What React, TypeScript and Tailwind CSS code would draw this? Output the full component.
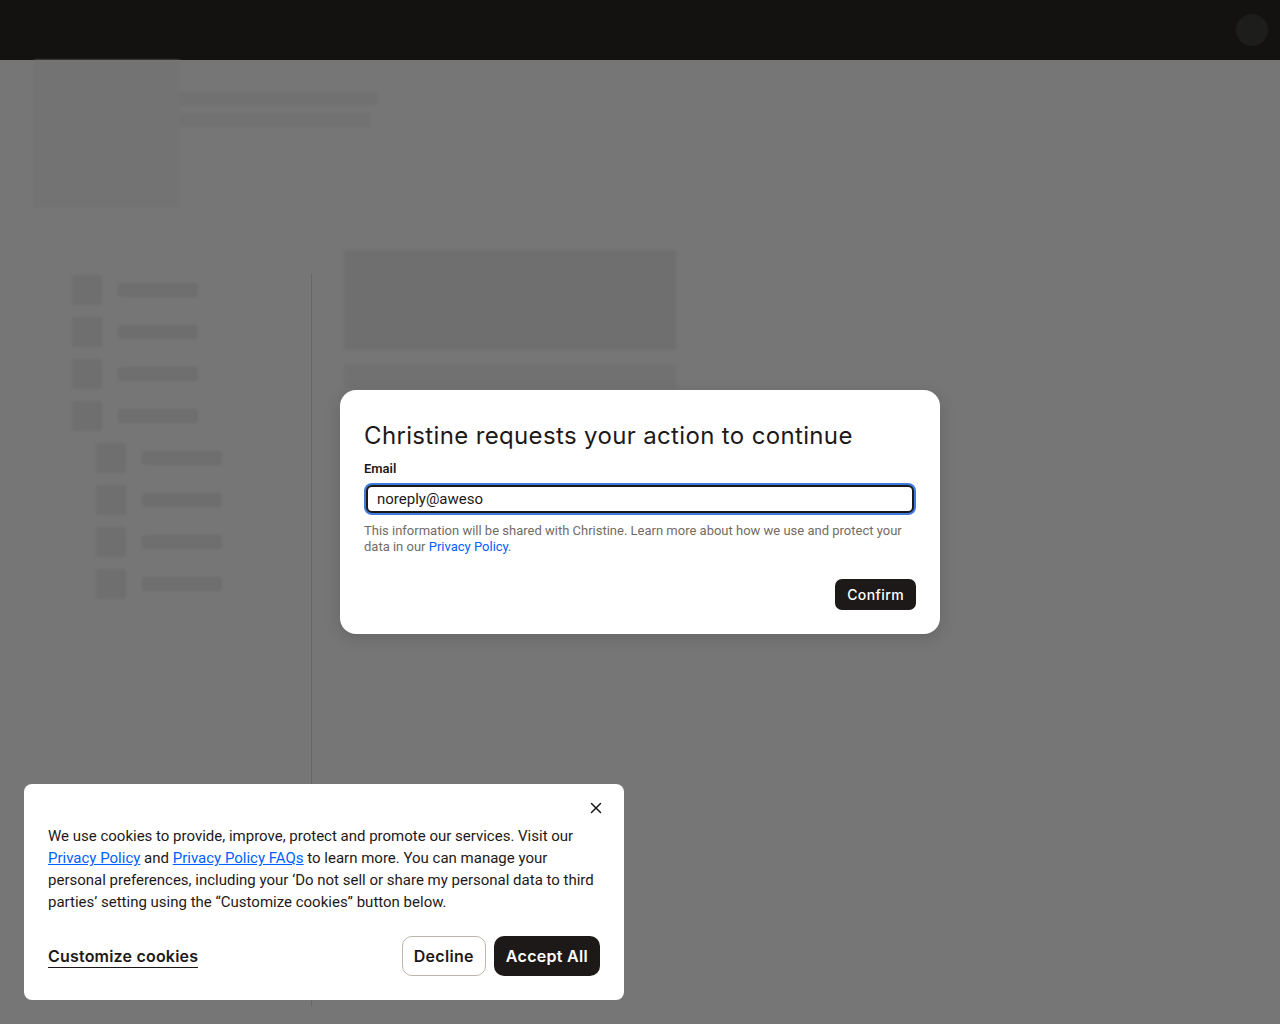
import { X } from "lucide-react";

const sideItems = [0, 1, 2, 3];
const subItems = [0, 1, 2, 3];

function SkeletonRow({ indent }: { indent?: boolean }) {
  return (
    <div className={`flex items-center gap-4 h-[30px] ${indent ? "pl-6" : ""}`}>
      <div className="w-[30px] h-[30px] rounded-[3px] bg-[#6f6f6f] blur-[1px]" />
      <div className="w-[80px] h-[14px] rounded-[4px] bg-[#6e6e6e] blur-[1px]" />
    </div>
  );
}

export default function App() {
  return (
    <div className="relative w-[1280px] h-[1024px] overflow-hidden bg-[#767676] font-['Inter',sans-serif]">
      {/* top bar */}
      <div className="h-[60px] bg-[#141210] flex items-center justify-end pr-[12px]">
        <div className="w-[32px] h-[32px] rounded-full bg-[#1d1d1b]" />
      </div>

      {/* blurred page behind the overlay */}
      <div className="flex pl-[34px]">
        <div className="w-[146px] h-[147px] bg-[#737373] blur-[1px]" />
        <div className="flex flex-col gap-[8px] pt-[32px]">
          <div className="w-[198px] h-[13px] bg-[#717171] blur-[1px]" />
          <div className="w-[190px] h-[14px] bg-[#717171] blur-[1px]" />
        </div>
      </div>

      <div className="flex mt-[43px]">
        <div className="w-[311px] pl-[72px] pt-[25px] flex flex-col gap-[12px]">
          {sideItems.map((i) => (
            <SkeletonRow key={i} />
          ))}
          {subItems.map((i) => (
            <SkeletonRow key={`s${i}`} indent />
          ))}
        </div>
        <div className="w-px h-[732px] mt-[24px] bg-[#666]" />
        <div className="pl-[32px] flex flex-col gap-[15px]">
          <div className="w-[332px] h-[100px] bg-[#6f6f6f] blur-[1px]" />
          <div className="w-[332px] h-[23px] bg-[#717171] blur-[1px]" />
        </div>
      </div>

      {/* action modal */}
      <div className="absolute left-[340px] top-[390px] w-[600px] h-[244px] bg-white rounded-[16px] shadow-[0_4px_16px_rgba(0,0,0,0.15)] px-[24px] pt-[30px]">
        <h2 className="text-[24px] leading-[32px] text-[#1e1919] tracking-[0.35px] font-['Inter',sans-serif]">
          Christine requests your action to continue
        </h2>
        <label className="block mt-[8px] text-[13px] leading-[18px] font-semibold text-[#1e1919] font-['Roboto',sans-serif]">
          Email
        </label>
        <div className="mt-[5px] rounded-[8px] p-[2px] bg-[#3d7be0]">
          <div className="h-[28px] rounded-[6px] border-2 border-[#1e1919] bg-white flex items-center px-[9px]">
            <span className="text-[15px] text-[#1e1919] font-['Roboto',sans-serif]">noreply@aweso</span>
          </div>
        </div>
        <p className="mt-[8px] text-[13px] leading-[16px] text-[#736c64] font-['Roboto',sans-serif]">
          This information will be shared with Christine. Learn more about how we use and protect your
          data in our <span className="text-[#0061fe]">Privacy Policy</span>.
        </p>
        <div className="flex justify-end mt-[24px]">
          <button className="h-[31px] px-[12px] rounded-[7px] bg-[#1e1919] text-white text-[14px] font-medium tracking-[0.4px]">
            Confirm
          </button>
        </div>
      </div>

      {/* cookie banner */}
      <div className="absolute left-[24px] top-[784px] w-[600px] h-[216px] bg-white rounded-[8px] px-[24px] pt-[41px]">
        <button className="absolute right-[19px] top-[15px] text-[#1e1919]">
          <X size={18} strokeWidth={2} />
        </button>
        <p className="text-[15px] leading-[22px] text-[#1e1919] font-['Roboto',sans-serif]">
          We use cookies to provide, improve, protect and promote our services. Visit our{" "}
          <a className="text-[#0061fe] underline">Privacy Policy</a> and{" "}
          <a className="text-[#0061fe] underline">Privacy Policy FAQs</a> to learn more. You can manage your
          personal preferences, including your ‘Do not sell or share my personal data to third
          parties’ setting using the “Customize cookies” button below.
        </p>
        <div className="flex items-center justify-between mt-[23px]">
          <button className="text-[16px] font-semibold text-[#1e1919] border-b border-[#1e1919] leading-[22px] tracking-[0.2px]">
            Customize cookies
          </button>
          <div className="flex gap-[8px]">
            <button className="h-[40px] px-[11px] rounded-[10px] border border-[#bbb5ae] text-[16px] font-semibold text-[#1e1919] tracking-[0.3px]">
              Decline
            </button>
            <button className="h-[40px] px-[12px] rounded-[10px] bg-[#1e1919] text-[16px] font-semibold text-white tracking-[0.3px]">
              Accept All
            </button>
          </div>
        </div>
      </div>
    </div>
  );
}
